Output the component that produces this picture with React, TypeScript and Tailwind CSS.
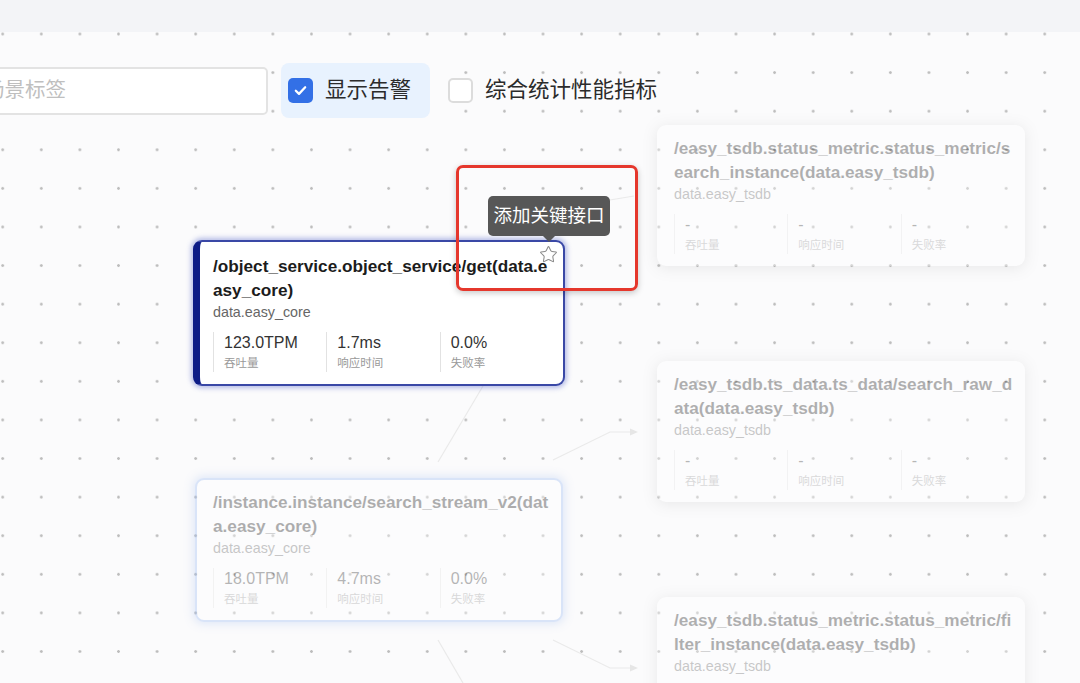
import React from "react";
import { Star } from "lucide-react";

type M = { value: string; label: string };

function Metrics({ items }: { items: M[] }) {
  return (
    <div className="mt-[10px] grid w-[340px] grid-cols-3">
      {items.map((m) => (
        <div key={m.label} className="border-l border-[#e2e2e2] pl-[10px]">
          <div className="text-[16px] leading-[22px] text-[#333333]">{m.value}</div>
          <div className="text-[11.5px] leading-[18px] text-[#999999]">{m.label}</div>
        </div>
      ))}
    </div>
  );
}

function Body({ title, sub, items }: { title: string; sub: string; items: M[] }) {
  return (
    <>
      <div className="w-[340px] break-all text-[17.2px] font-bold leading-[24px] text-[#1c1c1c]">{title}</div>
      <div className="text-[14.3px] leading-[20px] text-[#666666]">{sub}</div>
      <Metrics items={items} />
    </>
  );
}

const dash: M[] = [
  { value: "-", label: "吞吐量" },
  { value: "-", label: "响应时间" },
  { value: "-", label: "失败率" },
];

export default function App() {
  return (
    <div className="relative flex h-[683px] w-[1080px] flex-col overflow-hidden bg-[#fbfbfc] font-['Liberation_Sans','Noto_Sans_CJK_SC',sans-serif]">
      <div className="h-[32px] shrink-0 bg-[#f3f4f7]" />
      <div className="relative flex-1 bg-[radial-gradient(circle,#bdbdbd_1.1px,transparent_1.6px)] bg-[size:38.6px_38.6px] bg-[position:-16.6px_-17.3px]">
        <div className="flex items-center pt-[31px]">
          <div className="ml-[-28px] flex h-[48px] w-[296px] items-center rounded-[5px] border-2 border-[#e3e3e3] bg-white pl-[10px] text-[20.5px] text-[#bfbfbf]">
            场景标签
          </div>
          <div className="ml-[13px] flex h-[55px] items-center rounded-[8px] bg-[#e8f2fe] pl-[7px] pr-[19px]">
            <div className="flex h-[25px] w-[25px] items-center justify-center rounded-[5px] bg-[#3370e6]">
              <svg width="15" height="15" viewBox="0 0 16 16" fill="none">
                <path d="M3 8.3l3.4 3.3L13 4.6" stroke="white" strokeWidth="2.4" strokeLinecap="round" strokeLinejoin="round" />
              </svg>
            </div>
            <span className="ml-[12px] text-[21.5px] leading-none text-[#2b2b2b]">显示告警</span>
          </div>
          <div className="ml-[18px] flex items-center">
            <div className="h-[25px] w-[25px] rounded-[5px] border-2 border-[#dcdcdc] bg-white" />
            <span className="ml-[12px] text-[21.5px] leading-none text-[#2b2b2b]">综合统计性能指标</span>
          </div>
        </div>
      </div>

      {/* edges */}
      <svg className="pointer-events-none absolute left-0 top-0" width="1080" height="683" fill="none">
        <g stroke="#eaeaea" strokeWidth="1.2">
          <path d="M483 386 L438 462" />
          <path d="M553 460 L610 432 L634 432" />
          <path d="M553 640 L610 668 L634 668" />
          <path d="M438 640 L463 683" />
          <path d="M585 232 L610 200 L634 196" />
        </g>
        <g fill="#e6e6e6">
          <path d="M638 432 L630 428.5 L630 435.5 Z" />
          <path d="M638 668 L630 664.5 L630 671.5 Z" />
        </g>
      </svg>

      {/* faded right nodes */}
      <div className="absolute left-[657px] top-[125px] w-[368px] rounded-[9px] bg-white pb-[12px] pl-[17px] pr-[11px] pt-[11px] opacity-[0.34] shadow-[0_2px_14px_rgba(0,0,0,0.22)]">
        <Body title="/easy_tsdb.status_metric.status_metric/search_instance(data.easy_tsdb)" sub="data.easy_tsdb" items={dash} />
      </div>
      <div className="absolute left-[657px] top-[361px] w-[368px] rounded-[9px] bg-white pb-[12px] pl-[17px] pr-[11px] pt-[11px] opacity-[0.34] shadow-[0_2px_14px_rgba(0,0,0,0.22)]">
        <Body title="/easy_tsdb.ts_data.ts_data/search_raw_data(data.easy_tsdb)" sub="data.easy_tsdb" items={dash} />
      </div>
      <div className="absolute left-[657px] top-[597px] w-[368px] rounded-[9px] bg-white pb-[12px] pl-[17px] pr-[11px] pt-[11px] opacity-[0.34] shadow-[0_2px_14px_rgba(0,0,0,0.22)]">
        <Body title="/easy_tsdb.status_metric.status_metric/filter_instance(data.easy_tsdb)" sub="data.easy_tsdb" items={dash} />
      </div>

      {/* faded bottom-left node */}
      <div className="absolute left-[195px] top-[478px] w-[368px] rounded-[9px] border-2 border-[#9dbcf3] bg-white pb-[12px] pl-[16px] pr-[8px] pt-[10px] opacity-[0.35] shadow-[0_0_8px_2px_rgba(80,130,230,0.45)]">
        <Body
          title="/instance.instance/search_stream_v2(data.easy_core)"
          sub="data.easy_core"
          items={[
            { value: "18.0TPM", label: "吞吐量" },
            { value: "4.7ms", label: "响应时间" },
            { value: "0.0%", label: "失败率" },
          ]}
        />
      </div>

      {/* main node */}
      <div className="absolute left-[193px] top-[240px] w-[372px] rounded-[9px] border-2 border-l-[7px] border-[#3a48a6] border-l-[#0d1c86] bg-white pb-[12px] pl-[13px] pr-[10px] pt-[12px] shadow-[0_0_5px_2px_rgba(50,70,190,0.35)]">
        <Body
          title="/object_service.object_service/get(data.easy_core)"
          sub="data.easy_core"
          items={[
            { value: "123.0TPM", label: "吞吐量" },
            { value: "1.7ms", label: "响应时间" },
            { value: "0.0%", label: "失败率" },
          ]}
        />
      </div>

      {/* star */}
      <div className="absolute left-[539px] top-[245px] text-[#8a8a8a]">
        <Star size={19} strokeWidth={1.3} />
      </div>

      {/* red highlight */}
      <div className="pointer-events-none absolute left-[456px] top-[165px] h-[126px] w-[182px] rounded-[7px] border-[3px] border-[#e5372c] shadow-[0_2px_6px_rgba(0,0,0,0.22)]" />

      {/* tooltip */}
      <div className="absolute left-[488px] top-[196px] flex h-[40px] w-[122px] items-center justify-center rounded-[5px] bg-[#575757] text-[18.5px] leading-none text-white">
        添加关键接口
      </div>
      <div className="absolute left-[543px] top-[236px] h-0 w-0 border-l-[6px] border-r-[6px] border-t-[6px] border-l-transparent border-r-transparent border-t-[#575757]" />
    </div>
  );
}
